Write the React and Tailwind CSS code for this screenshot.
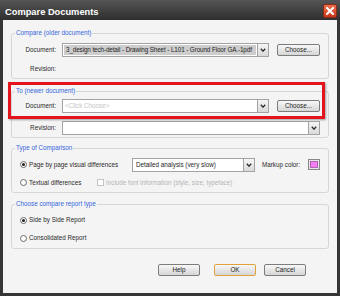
import React from 'react';

function Chevron() {
  return (
    <svg width="6" height="4" viewBox="0 0 6 4">
      <path d="M0.8 0.8 L3 3.2 L5.2 0.8" fill="none" stroke="#2a2a2a" strokeWidth="1.3" />
    </svg>
  );
}

function Combo({ width, children, field }) {
  return (
    <div className={"flex h-[14px] border border-[#a3a3a3] bg-white " + width}>
      <div className={"flex-1 flex items-center pl-[2px] overflow-hidden whitespace-nowrap " + (field || "")}>
        {children}
      </div>
      <div className="w-[11px] border-l border-[#a3a3a3] bg-linear-to-b from-[#f6f6f6] to-[#d9d9d9] flex items-center justify-center">
        <Chevron />
      </div>
    </div>
  );
}

function Button({ children, ok, className }) {
  return (
    <div
      className={
        "flex items-center justify-center h-[12px] w-[42px] rounded-[2px] border bg-linear-to-b from-[#f7f7f7] to-[#d6d6d6] text-[#222] " +
        (ok ? "border-[#e3a13c]" : "border-[#7c7c7c]") +
        " " +
        (className || "")
      }
    >
      {children}
    </div>
  );
}

function Radio({ checked }) {
  return (
    <div className="w-[7px] h-[7px] rounded-full border border-[#6a6a6a] bg-white flex items-center justify-center shrink-0">
      {checked && <div className="w-[3px] h-[3px] rounded-full bg-[#1e1e1e]" />}
    </div>
  );
}

function Group({ title, className, children }) {
  return (
    <fieldset className={"border border-[#d6d6d6] rounded-[3px] " + (className || "")}>
      <legend className="ml-[3px] px-[1px] text-[#3566dd] leading-[8px]">{title}</legend>
      {children}
    </fieldset>
  );
}

function Label({ children }) {
  return <div className="w-[44px] text-right shrink-0">{children}</div>;
}

export default function App() {
  return (
    <div className="relative w-[340px] h-[296px] overflow-hidden bg-[#363636] flex flex-col font-['Liberation_Sans',Arial,sans-serif]">
      <div className="h-[20px] flex items-start justify-between pl-[5px] pr-[3px] bg-linear-to-b from-[#555555] to-[#2f2f2f]">
        <span className="text-white font-bold text-[9.3px] leading-[10px] pt-[7px]">Compare Documents</span>
        <div className="mt-[4px] w-[14px] h-[14px] rounded-[2px] border border-[#8e2a18] bg-linear-to-b from-[#f0704c] to-[#c9381a] flex items-center justify-center">
          <svg width="8" height="8" viewBox="0 0 8 8">
            <path d="M1 1 L7 7 M7 1 L1 7" stroke="white" strokeWidth="2" strokeLinecap="square" />
          </svg>
        </div>
      </div>

      <div className="flex-1 mx-[3px] mb-[3px] bg-[#f4f4f4] px-[8px] pt-[9px] text-[6.3px] leading-[8px] text-[#2a2a2a]">
        <Group title="Compare (older document)" className="pb-[3px]">
          <div className="flex items-center h-[13px] mt-[6px]">
            <Label>Document:</Label>
            <Combo width="ml-[6px] w-[207px]" field="bg-[#cdcdcd] m-[1px] pl-[1px]">
              <span className="text-[#1e1e1e] tracking-[-0.1px]">3_design tech-detail - Drawing Sheet - L101 - Ground Floor GA.-1pdf</span>
            </Combo>
            <Button className="ml-[8px] w-[43px]">Choose...</Button>
          </div>
          <div className="flex items-center h-[13px] mt-[6px]">
            <Label>Revision:</Label>
          </div>
        </Group>

        <Group title="To (newer document)" className="mt-[8px] pb-[3px]">
          <div className="flex items-center h-[14px] mt-[4px]">
            <Label>Document:</Label>
            <Combo width="ml-[6px] w-[207px]">
              <span className="text-[#c4c4c4]">&lt;Click Choose&gt;</span>
            </Combo>
            <Button className="ml-[8px] w-[43px]">Choose...</Button>
          </div>
          <div className="flex items-center h-[13px] mt-[8px]">
            <Label>Revision:</Label>
            <Combo width="ml-[6px] w-[258px] h-[13px]" />
          </div>
        </Group>

        <Group title="Type of Comparison" className="mt-[6px] pb-[3px]">
          <div className="flex items-center h-[13px] mt-[6px] pl-[8px]">
            <div className="flex items-center w-[112px]">
              <Radio checked />
              <span className="ml-[2px]">Page by page visual differences</span>
            </div>
            <Combo width="w-[123px] h-[13px]">
              <span className="pl-[1px] text-[#1e1e1e]">Detailed analysis (very slow)</span>
            </Combo>
            <span className="ml-[7px] w-[46px]">Markup color:</span>
            <div className="w-[12px] h-[11px] border border-[#888888] bg-[#e6e6e6] p-[1px]">
              <div className="w-full h-full bg-[#f27ef2] border border-[#b363b3]" />
            </div>
          </div>
          <div className="flex items-center h-[13px] mt-[5px] pl-[8px]">
            <div className="flex items-center w-[77px]">
              <Radio />
              <span className="ml-[2px]">Textual differences</span>
            </div>
            <div className="w-[7px] h-[7px] border border-[#c4c4c4] bg-white" />
            <span className="ml-[2px] text-[#b4b4b4]">Include font information (style, size, typeface)</span>
          </div>
        </Group>

        <Group title="Choose compare report type" className="mt-[7px] pb-[4px]">
          <div className="flex items-center h-[12px] mt-[6px] pl-[8px]">
            <Radio checked />
            <span className="ml-[2px]">Side by Side Report</span>
          </div>
          <div className="flex items-center h-[12px] mt-[6px] pl-[8px]">
            <Radio />
            <span className="ml-[2px]">Consolidated Report</span>
          </div>
        </Group>

        <div className="flex mt-[15px] ml-[147px]">
          <Button>Help</Button>
          <Button ok className="ml-[14px]">OK</Button>
          <Button className="ml-[8px]">Cancel</Button>
        </div>
      </div>

      <div className="absolute left-[8px] top-[82px] w-[317px] h-[37px] border-[3px] border-[#e3141b] shadow-[1px_1px_2px_rgba(0,0,0,0.35)]" />
    </div>
  );
}
